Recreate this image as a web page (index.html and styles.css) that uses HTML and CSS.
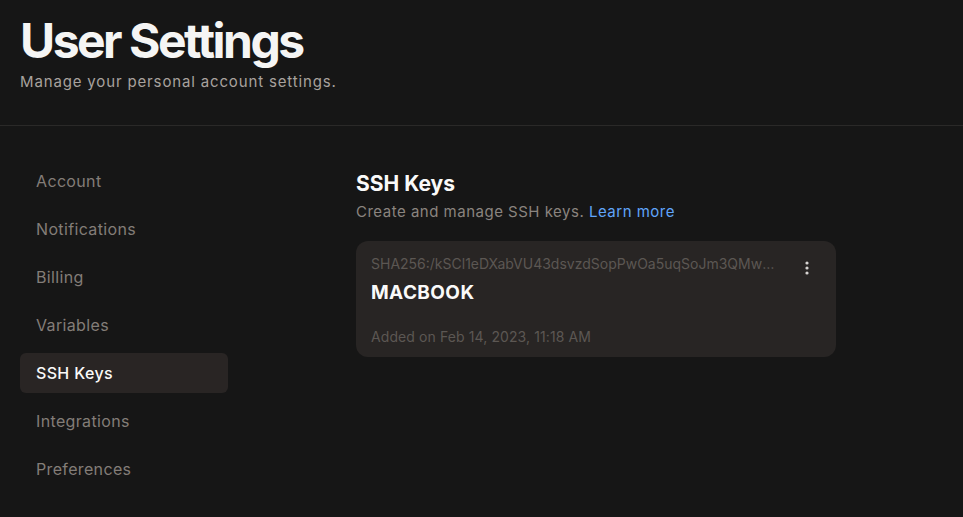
FILE: index.html
```html
<!DOCTYPE html>
<html lang="en">
<head>
<meta charset="utf-8">
<title>User Settings</title>
<link rel="stylesheet" href="styles.css">
</head>
<body>
<header class="page-header">
  <h1 class="page-title">User Settings</h1>
  <p class="page-subtitle">Manage your personal account settings.</p>
</header>
<div class="layout">
  <nav class="sidebar">
    <a class="nav-item">Account</a>
    <a class="nav-item">Notifications</a>
    <a class="nav-item">Billing</a>
    <a class="nav-item">Variables</a>
    <a class="nav-item active">SSH Keys</a>
    <a class="nav-item">Integrations</a>
    <a class="nav-item">Preferences</a>
  </nav>
  <main class="content">
    <h2 class="section-title">SSH Keys</h2>
    <p class="section-desc">Create and manage SSH keys. <a class="link">Learn more</a></p>
    <div class="key-card">
      <div class="key-info">
        <div class="key-hash">SHA256:/kSCl1eDXabVU43dsvzdSopPwOa5uqSoJm3QMw0aB7xYzLqP</div>
        <div class="key-name">MACBOOK</div>
        <div class="key-date">Added on Feb 14, 2023, 11:18 AM</div>
      </div>
      <button class="menu-btn" aria-label="More">
        <svg width="4" height="14" viewBox="0 0 4 14"><circle cx="2" cy="2" r="1.6" fill="#d6d3d1"/><circle cx="2" cy="7" r="1.6" fill="#d6d3d1"/><circle cx="2" cy="12" r="1.6" fill="#d6d3d1"/></svg>
      </button>
    </div>
  </main>
</div>
</body>
</html>
```
FILE: styles.css
```css
* { box-sizing: border-box; }
html, body { margin: 0; padding: 0; }
body {
  background: #161616;
  font-family: Inter, "Noto Sans", sans-serif;
  color: #fafaf9;
  height: 517px;
  overflow: hidden;
}
.page-header {
  padding: 12px 20px 0;
  height: 126px;
  border-bottom: 1px solid #2a2928;
}
.page-title {
  margin: 0;
  font-size: 48px;
  font-weight: 700;
  letter-spacing: -2.5px;
  line-height: 58px;
  color: #f5f5f4;
}
.page-subtitle {
  margin: 2px 0 0;
  font-size: 15px;
  line-height: 20px;
  color: #a8a29e;
  letter-spacing: 0.85px;
}
.layout {
  display: flex;
  padding: 35px 20px 0;
}
.sidebar {
  width: 208px;
  margin-right: 128px;
  display: flex;
  flex-direction: column;
  gap: 8px;
}
.nav-item {
  display: flex;
  align-items: center;
  height: 40px;
  padding: 0 16px;
  border-radius: 6px;
  font-size: 16px;
  color: #837d78;
  letter-spacing: 0.35px;
}
.nav-item.active {
  background: #292524;
  color: #fafaf9;
  font-weight: 500;
}
.content {
  width: 480px;
  padding-top: 9px;
}
.section-title {
  margin: 0;
  font-size: 21px;
  font-weight: 700;
  line-height: 28px;
  letter-spacing: 0;
}
.section-desc {
  margin: 3px 0 0;
  font-size: 15px;
  line-height: 22px;
  color: #8a847f;
  letter-spacing: 0.5px;
}
.link { color: #60a5fa; }
.key-card {
  margin-top: 18px;
  background: #282524;
  border-radius: 12px;
  height: 116px;
  padding: 14px 15px;
  display: flex;
  gap: 24px;
}
.key-info {
  flex: 1;
  min-width: 0;
}
.key-hash {
  font-size: 14px;
  line-height: 18px;
  color: #5c5753;
  letter-spacing: 0;
  white-space: nowrap;
  overflow: hidden;
  text-overflow: ellipsis;
}
.key-name {
  margin-top: 8px;
  font-size: 19px;
  font-weight: 700;
  line-height: 24px;
  letter-spacing: 0.4px;
  color: #fafaf9;
}
.key-date {
  margin-top: 23px;
  font-size: 14px;
  line-height: 18px;
  color: #5c5753;
  letter-spacing: 0.1px;
}
.menu-btn {
  background: none;
  border: 0;
  padding: 6px 12px 0 0;
  height: 24px;
  display: flex;
  cursor: pointer;
}
```
